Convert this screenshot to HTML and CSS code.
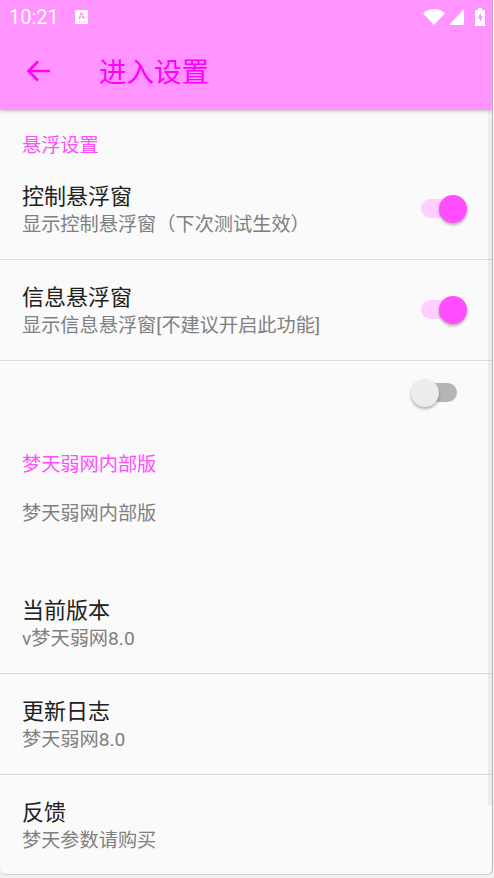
FILE: index.html
```html
<!DOCTYPE html>
<html lang="zh">
<head>
<meta charset="utf-8">
<title>进入设置</title>
<link rel="stylesheet" href="styles.css">
</head>
<body>
<div class="screen">
  <header class="appbar">
    <div class="status">
      <span class="time">10:21</span>
      <svg class="notif" width="13" height="14" viewBox="0 0 13 14"><path fill="#fff" d="M1 0h11a1 1 0 0 1 1 1v13H0V1a1 1 0 0 1 1-1z"/><path fill="#ff93ff" d="M5.600 2.500h1.800l2.400 6.500H8.400L8 7.700H5L4.600 9H3.200zM5.400 6.500h2.200L6.500 3.800zM4 11h1.200v1.200H4zM6.500 11h1.200v1.200H6.500zM9 11h1.200v1.200H9z"/></svg>
      <span class="spacer"></span>
      <svg class="wifi" width="22" height="16" viewBox="0 0 22 16"><path fill="#fff" d="M0 4.200C3 1.600 6.800 0 11 0s8 1.600 11 4.200L11 16z"/></svg>
      <svg class="signal" width="15" height="16" viewBox="0 0 15 16"><path fill="#fff" d="M0 16 15 0v16z"/></svg>
      <svg class="battery" width="10" height="18" viewBox="0 0 10 18"><path fill="#fff" d="M3 0h4v2h3v16H0V2h3z"/><path fill="#ff93ff" d="M5.800 4.500 2.800 10.500h2v4l3-6.500h-2z"/></svg>
    </div>
    <div class="toolbar">
      <svg class="back" width="26" height="26" viewBox="0 0 26 26"><path fill="none" stroke="#ff00ff" stroke-width="2.600" d="M26 13H5M14 3.500 4.500 13l9.500 9.500"/></svg>
      <h1 class="title">进入设置</h1>
    </div>
  </header>
  <main class="content">
    <h2 class="category first">悬浮设置</h2>
    <div class="row">
      <div class="text"><div class="name">控制悬浮窗</div><div class="desc">显示控制悬浮窗（下次测试生效）</div></div>
      <span class="switch on"></span>
    </div>
    <div class="row">
      <div class="text"><div class="name">信息悬浮窗</div><div class="desc">显示信息悬浮窗[不建议开启此功能]</div></div>
      <span class="switch on"></span>
    </div>
    <div class="bare"><span class="switch off"></span></div>
    <h2 class="category second">梦天弱网内部版</h2>
    <p class="note">梦天弱网内部版</p>
    <div class="row">
      <div class="text"><div class="name">当前版本</div><div class="desc">v梦天弱网8.0</div></div>
    </div>
    <div class="row">
      <div class="text"><div class="name">更新日志</div><div class="desc">梦天弱网8.0</div></div>
    </div>
    <div class="row">
      <div class="text"><div class="name">反馈</div><div class="desc">梦天参数请购买</div></div>
    </div>
  </main>
  <span class="scrollbar"></span>
</div>
</body>
</html>
```
FILE: styles.css
```css
* { box-sizing: border-box; }
html, body { margin: 0; height: 100%; background: #f0f0f0; }
body { font-family: Roboto, "Noto Sans CJK SC", sans-serif; overflow: hidden; }
.screen { position: relative; width: 493px; height: 875px; display: flex; flex-direction: column; background: #fafafa; border-right: 1px solid #b8b8b8; border-bottom: 1px solid #cfcfcf; border-radius: 0 0 6px 6px; overflow: hidden; }
.appbar { height: 110px; background: #ff93ff; box-shadow: 0 1px 4px rgba(0,0,0,.25); flex: none; position: relative; z-index: 1; }
.status { height: 34px; display: flex; align-items: center; padding: 0 7px 0 9px; color: #fff; }
.time { font-size: 20px; line-height: 34px; width: 66px; }
.spacer { flex: 1; }
.wifi { margin-right: 4px; }
.signal { margin-right: 11px; }
.toolbar { height: 74px; display: flex; align-items: center; padding-left: 24px; }
.title { margin: 0 0 2px 49px; font-size: 27.5px; font-weight: 400; color: #ff00ff; }
.content { flex: 1; }
.category { margin: 0; padding-left: 22px; font-size: 19.2px; line-height: 26px; font-weight: 400; color: #ff4dff; }
.category.first { padding-top: 23px; height: 49px; }
.category.second { height: 26px; margin-top: 16px; }
.row { height: 101px; padding: 23px 35px 0 22px; display: flex; align-items: flex-start; justify-content: space-between; border-bottom: 1px solid #dcdcdc; }
.row:last-child { border-bottom: 0; }
.name { font-size: 22px; line-height: 29px; margin-bottom: 1px; color: #212121; }
.desc { font-size: 19.2px; line-height: 26px; color: #7f7f7f; }
.switch { position: relative; display: block; width: 36px; height: 19px; border-radius: 10px; }
.switch::after { content: ""; position: absolute; top: -4px; width: 28px; height: 28px; border-radius: 50%; box-shadow: 0 2px 3px rgba(0,0,0,.3); }
.switch.on { background: #ffcfff; margin-top: 17px; }
.switch.on::after { right: -10px; background: #ff4dff; }
.switch.off { background: #b5b5b5; }
.switch.off::after { left: -10px; background: #ececec; }
.bare { display: flex; justify-content: flex-end; padding: 22px 35px 0 0; height: 75px; }
.note { margin: 0; padding: 23px 22px 0; font-size: 19.2px; line-height: 26px; color: #7f7f7f; height: 95px; }
.scrollbar { position: absolute; top: 110px; right: 0; width: 4px; height: 695px; background: rgba(0,0,0,.05); }
```
